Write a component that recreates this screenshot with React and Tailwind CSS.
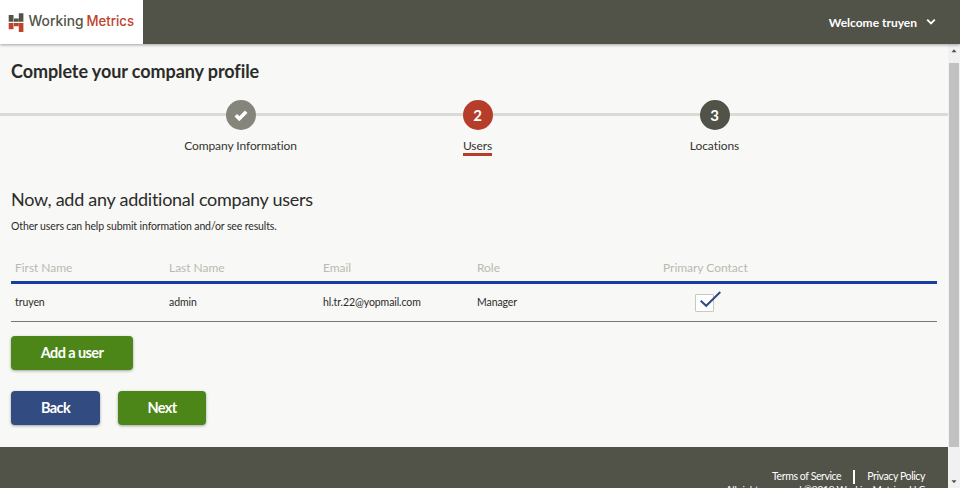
const steps = [
  { label: 'Company Information', mark: 'check', tone: 'bg-[#85857c]' },
  { label: 'Users', mark: '2', tone: 'bg-[#b53d2a]', current: true },
  { label: 'Locations', mark: '3', tone: 'bg-[#515348]' },
];

function Logo() {
  return (
    <svg width="143" height="44" viewBox="0 0 143 44">
      <path fill="#515348" d="M8.7 15h4.8v6.8H8.7zM14 18.6h4.6v3.2H14zM18.8 13.2h4.6v8.6h-4.6z" />
      <path fill="#c0412c" d="M8.7 22.9h4.8v6.3H8.7zM14 22.9h4.6v3.3H14zM18.8 22.9h4.6v9h-4.6z" />
      <g fontFamily="Inter, sans-serif" fontSize="13.8" fontWeight="500">
        <text x="28.5" y="26.2" fill="#515348" textLength="55" lengthAdjust="spacingAndGlyphs">Working</text>
        <text x="86.5" y="26.2" fill="#c0412c" textLength="47.5" lengthAdjust="spacingAndGlyphs">Metrics</text>
      </g>
    </svg>
  );
}

function Header() {
  return (
    <header className="relative z-10 flex h-11 shrink-0 justify-between bg-[#515348] shadow-[0_1px_3px_rgba(0,0,0,0.35)]">
      <div className="w-[143px] bg-white"><Logo /></div>
      <div className="flex items-center pr-6 text-[12px] font-bold text-white">
        <span className="pt-px">Welcome truyen</span>
        <svg className="ml-[9px]" width="10" height="8" viewBox="0 0 10 8">
          <path d="M1.2 1.6 5 5.4l3.8-3.8" fill="none" stroke="white" strokeWidth="1.8" />
        </svg>
      </div>
    </header>
  );
}

function Steps() {
  return (
    <div className="mt-[17px] grid h-[58px] grid-cols-[122px_237px_237px_237px_1fr] bg-[linear-gradient(#dadbd4,#dadbd4)] bg-[length:100%_3px] bg-[position:0_13px] bg-no-repeat">
      <span />
      {steps.map((s) => (
        <div key={s.label} className="flex flex-col items-center">
          <div className={`flex size-[30px] items-center justify-center rounded-full text-[15px] font-bold tracking-[-0.4px] text-white ${s.tone}`}>
            {s.mark === 'check' ? (
              <svg width="14" height="12" viewBox="0 0 14 12">
                <path d="m1.8 6.2 3.5 3.5 6.9-6.9" fill="none" stroke="white" strokeWidth="3.6" />
              </svg>
            ) : s.mark}
          </div>
          <div className={`mt-[7px] border-b-[3px] pt-px text-[12px] leading-[15px] tracking-[-0.08px] text-[#34352f] ${s.current ? 'border-[#b53d2a]' : 'border-transparent'}`}>{s.label}</div>
        </div>
      ))}
    </div>
  );
}

const cols = 'grid grid-cols-[154px_154px_154px_154px_1fr] items-center pl-1';

function Users() {
  return (
    <div className="ml-[11px] mt-[18px] w-[926px]">
      <div className={`${cols} h-[32px] border-b-[3px] border-[#163fa2] pt-[2px] text-[12px] tracking-[-0.03px] text-[#babab2]`}>
        <span>First Name</span><span>Last Name</span><span>Email</span><span>Role</span>
        <span className="pl-8">Primary Contact</span>
      </div>
      <div className={`${cols} h-[38px] border-b border-[#77786f] text-[10.5px] tracking-[-0.08px] text-[#2b2c29]`}>
        <span className="pt-px">truyen</span><span className="pt-px">admin</span><span className="pt-px">hl.tr.22@yopmail.com</span><span className="pt-px">Manager</span>
        <svg className="-mt-px ml-[64px]" width="28" height="24" viewBox="0 0 28 24">
          <rect x="0.5" y="4.5" width="18" height="17" rx="0.5" fill="white" stroke="#c8c9c2" />
          <path d="m5.7 10.8 5.5 5L25.3 2" fill="none" stroke="#324b80" strokeWidth="2" />
        </svg>
      </div>
    </div>
  );
}

function Button({ children, className }) {
  return (
    <button className={`h-[34px] rounded-[4px] pb-px text-[14.5px] font-bold tracking-[-0.6px] text-white shadow-[0_1px_3px_rgba(0,0,0,0.35)] ${className}`}>{children}</button>
  );
}

export default function App() {
  return (
    <div className="flex h-[488px] w-[960px] flex-col overflow-hidden bg-[#f8f8f6] font-[Lato,sans-serif] text-[#2b2c29]">
      <Header />
      <div className="flex min-h-0 flex-1">
        <main className="flex w-[948px] flex-col overflow-hidden">
          <h1 className="ml-[11px] mt-[15px] text-[18px] font-bold leading-6 tracking-[-0.08px]">Complete your company profile</h1>
          <Steps />
          <h2 className="ml-[11px] mt-[31px] text-[18px] leading-6 tracking-[-0.26px]">Now, add any additional company users</h2>
          <p className="ml-[11px] mt-[7px] pt-px text-[10.5px] leading-[15px] tracking-[-0.12px]">Other users can help submit information and/or see results.</p>
          <Users />
          <div className="ml-[11px] mt-[14px] flex"><Button className="w-[122px] bg-[#4d8618]">Add a user</Button></div>
          <div className="ml-[11px] mt-[21px] flex gap-[18px]">
            <Button className="w-[89px] bg-[#324b80]">Back</Button>
            <Button className="w-[88px] bg-[#4d8618]">Next</Button>
          </div>
          <footer className="mt-[22px] h-[60px] shrink-0 bg-[#515348] pr-[23px] pt-[23px] text-white">
            <div className="flex h-[14px] items-center justify-end text-[10.5px] tracking-[-0.4px]">
              <span>Terms of Service</span>
              <span className="mx-[12px] h-[14px] w-[2px] bg-white" />
              <span>Privacy Policy</span>
            </div>
            <div className="text-right text-[10px] leading-[10px] tracking-[-0.18px]">All rights reserved ©2019 WorkingMetrics, LLC</div>
          </footer>
        </main>
        <div className="flex w-3 flex-col items-center bg-[#f1f1f1]">
          <svg width="12" height="19" viewBox="0 0 12 19"><path d="M3.5 8.3 6 5.3l2.5 3z" fill="#505050" /></svg>
          <div className="h-[384px] w-[10px] bg-[#c1c1c1]" />
          <svg className="mt-auto" width="12" height="12" viewBox="0 0 12 12"><path d="M3.5 4.3h5L6 7.3z" fill="#505050" /></svg>
        </div>
      </div>
    </div>
  );
}
